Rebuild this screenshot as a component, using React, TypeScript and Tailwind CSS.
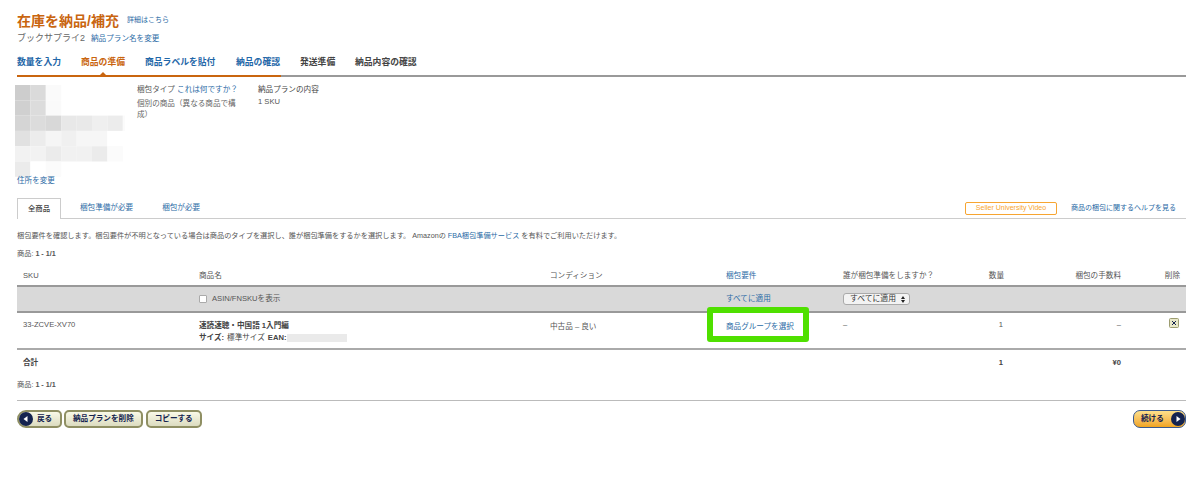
import React from "react";

const font = { fontFamily: '"Liberation Sans","Noto Sans CJK JP",sans-serif' };

const mosaic = [
  ["#cdcdcd", "#dadada", "#fafafa"],
  ["#d0d0d0", "#dcdcdc", "#fafafa"],
  ["#d5d5d5", "#dcdcdc", "#d8d8d8", "#e8e8e8", "#e9e9e9", "#efefef", "#ececec", "#fbfbfb"],
  ["#e1e1e1", "#ececec", "#f5f5f5", "#f0f0f0", "#f6f6f6", "#f6f6f6", "#ffffff"],
  ["#f2f2f2", "#f2f2f2", "#ebebeb", "#f1f1f1", "#f1f1f1", "#ebebeb", "#fbfbfb"],
  ["#ebebeb", "#ffffff", "#fbfbfb"],
];

const Link = ({ children, className = "" }: { children: React.ReactNode; className?: string }) => (
  <a className={`text-[#2a6aa5] ${className}`}>{children}</a>
);

const Mosaic = () => (
  <svg width="110" height="94" viewBox="0 0 110 94" className="block">
    {mosaic.map((row, y) =>
      row.map((c, x) => <rect key={`${x}-${y}`} x={x * 15.4} y={y * 15.3} width="15.4" height="15.3" fill={c} />)
    )}
  </svg>
);

const Circle = ({ dir }: { dir: "left" | "right" }) => (
  <svg width="14" height="14" viewBox="0 0 14 14" className="shrink-0">
    <circle cx="7" cy="7" r="7" fill="#14234f" />
    <polygon points={dir === "left" ? "8.5,4 4.5,7 8.5,10" : "5.5,4 9.5,7 5.5,10"} fill="#fff" />
  </svg>
);

const OliveBtn = ({ children, icon }: { children: React.ReactNode; icon?: boolean }) => (
  <button
    className={`flex h-[18px] items-center gap-[4px] border-2 border-[#8f8f63] bg-gradient-to-b from-[#f9f9e8] to-[#dcdcc0] text-[7.6px] font-bold text-[#14234f] ${
      icon ? "w-[45px] justify-start rounded-l-[9px] rounded-r-[5px]" : "justify-center rounded-[5px] px-[7px]"
    }`}
  >
    {icon && <Circle dir="left" />}
    {children}
  </button>
);

const row = "grid grid-cols-[176px_351px_176px_117px_117px_56px_117px_59px]";

export default function App() {
  return (
    <div style={font} className="h-[489px] w-[1200px] overflow-hidden bg-white text-[#555]">
      <div className="ml-[17px] w-[1169px] pt-[12px]">
        <div className="flex h-[17px] items-center gap-[8px]">
          <h1 className="text-[14px] leading-none font-bold text-[#c9650f]">在庫を納品/補充</h1>
          <Link className="text-[7px]">詳細はこちら</Link>
        </div>
        <div className="mt-[4px] flex h-[12px] items-center gap-[6px]">
          <span className="text-[9px] text-[#666]">ブックサプライ2</span>
          <Link className="text-[7.6px]">納品プラン名を変更</Link>
        </div>

        <div className="mt-[10px] flex h-[20px] items-start pt-[1px] text-[8.8px] leading-[12px] font-bold">
          <span className="w-[64px] text-[#1f67a8]">数量を入力</span>
          <span className="w-[64px] text-[#c9650f]">商品の準備</span>
          <span className="w-[91px] text-[#1f67a8]">商品ラベルを貼付</span>
          <span className="w-[64px] text-[#1f67a8]">納品の確認</span>
          <span className="w-[55px] text-[#444]">発送準備</span>
          <span className="text-[#444]">納品内容の確認</span>
        </div>
        <div className="relative flex h-[2px]">
          <div className="w-[264px] bg-[#c9650f]" />
          <div className="flex-1 bg-[#999]" />
          <div className="absolute -top-[3px] left-[83px] h-0 w-0 border-x-[3px] border-b-[3px] border-x-transparent border-b-[#c9650f]" />
        </div>

        <div className="mt-[7px] flex h-[113px] text-[7.6px] leading-[11px]">
          <div className="-ml-[2px] w-[122px] shrink-0">
            <div className="mt-[1px]">
              <Mosaic />
            </div>
            <Link className="mt-[-4px] block pl-[2px] leading-[12px]">住所を変更</Link>
          </div>
          <div className="w-[121px] shrink-0">
            <div className="mb-[3px]">
              梱包タイプ <Link>これは何ですか？</Link>
            </div>
            <div className="w-[105px] text-[#666]">個別の商品（異なる商品で構成）</div>
          </div>
          <div>
            <div className="mb-[1px] text-[#444]">納品プランの内容</div>
            <div>1 SKU</div>
          </div>
        </div>

        <div className="flex h-[22px] items-end border-b border-[#ccc]">
          <div className="-mb-px flex h-[21px] w-[44px] items-center justify-center border border-b-0 border-[#ccc] bg-white text-[7.4px] font-medium text-[#444]">
            全商品
          </div>
          <Link className="mb-[5px] ml-[19px] text-[7.6px]">梱包準備が必要</Link>
          <Link className="mb-[5px] ml-[29px] text-[7.6px]">梱包が必要</Link>
          <div className="mb-[3px] ml-auto flex items-center gap-[14px] pr-[10px]">
            <span className="flex h-[13px] w-[92px] items-center justify-center rounded-[2px] border-[1.5px] border-[#f7a531] text-[7px] font-medium text-[#f7a531]">
              Seller University Video
            </span>
            <Link className="text-[7px]">商品の梱包に関するヘルプを見る</Link>
          </div>
        </div>

        <p className="mt-[12px] text-[7.2px] leading-[10px] text-[#555]">
          梱包要件を確認します。梱包要件が不明となっている場合は商品のタイプを選択し、誰が梱包準備をするかを選択します。 Amazonの
          <Link> FBA梱包準備サービス </Link>
          を有料でご利用いただけます。
        </p>
        <p className="mt-[8px] text-[7.2px] leading-[10px]">
          商品: <b>1 - 1/1</b>
        </p>

        <div className={`${row} mt-[7px] h-[21px] items-center border-b-2 border-[#999] text-[7.6px]`}>
          <div className="pl-[6px]">SKU</div>
          <div className="pl-[6px]">商品名</div>
          <div className="pl-[6px]">コンディション</div>
          <Link className="pl-[6px]">梱包要件</Link>
          <div className="pl-[6px] whitespace-nowrap">誰が梱包準備をしますか？</div>
          <div className="pr-[6px] text-right">数量</div>
          <div className="pr-[6px] text-right">梱包の手数料</div>
          <div className="pr-[6px] text-right">削除</div>
        </div>

        <div className={`${row} h-[26px] items-center border-b-2 border-[#999] bg-[#d9d9d9] text-[7.6px]`}>
          <div />
          <label className="flex items-center gap-[5px] pl-[6px]">
            <span className="h-[8px] w-[8px] rounded-[1px] border border-[#aaa] bg-white" />
            ASIN/FNSKUを表示
          </label>
          <div />
          <Link className="pl-[6px]">すべてに適用</Link>
          <div className="pl-[6px]">
            <span className="flex h-[12px] w-[67px] items-center justify-between rounded-[3px] border border-[#aaa] bg-[#f3f3f3] pr-[4px] pl-[6px] text-[7.8px] text-[#333]">
              すべてに適用
              <svg width="4" height="7" viewBox="0 0 4 7">
                <path d="M0 3 2 0 4 3ZM0 4 2 7 4 4Z" fill="#222" />
              </svg>
            </span>
          </div>
          <div />
          <div />
          <div />
        </div>

        <div className={`${row} h-[37px] border-b-2 border-[#aaa] text-[7.6px]`}>
          <div className="pt-[6px] pl-[6px] text-[#555]">33-ZCVE-XV70</div>
          <div className="pt-[7px] pl-[6px] leading-[12px] text-[#444]">
            <div className="font-bold">速読速聴・中国語 1入門編</div>
            <div className="flex items-center">
              <b>サイズ:</b>
              <span className="mx-[3px]">標準サイズ</span>
              <b>EAN:</b>
              <span className="ml-[1px] h-[8px] w-[60px] bg-[#eaeaea]" />
            </div>
          </div>
          <div className="pt-[8px] pl-[6px]">中古品 – 良い</div>
          <div className="relative pt-[8px] pl-[6px]">
            <Link>商品グループを選択</Link>
            <div className="absolute -top-[6px] -left-[13px] h-[35px] w-[102px] rounded-[3px] border-[6px] border-[#4fe000]" />
          </div>
          <div className="pt-[6px] pl-[6px]">–</div>
          <div className="pt-[6px] pr-[7px] text-right">1</div>
          <div className="pt-[6px] pr-[6px] text-right">–</div>
          <div className="flex items-start justify-end pt-[5px] pr-[7px]">
            <svg width="10" height="10" viewBox="0 0 10 10">
              <rect x="0.5" y="0.5" width="9" height="9" rx="1" fill="#e8e8c8" stroke="#9c9c70" />
              <path d="M3 3 7 7M7 3 3 7" stroke="#14234f" strokeWidth="1" />
            </svg>
          </div>
        </div>

        <div className={`${row} h-[25px] items-center pt-[1px] text-[7.6px] font-bold text-[#444]`}>
          <div className="pl-[6px]">合計</div>
          <div />
          <div />
          <div />
          <div />
          <div className="pr-[7px] text-right">1</div>
          <div className="pr-[6px] text-right">¥0</div>
          <div />
        </div>

        <p className="mt-[5px] text-[7.2px] leading-[10px]">
          商品: <b>1 - 1/1</b>
        </p>

        <div className="mt-[10px] flex items-center justify-between border-t border-[#bbb] pt-[9px]">
          <div className="flex gap-[2px]">
            <OliveBtn icon>戻る</OliveBtn>
            <OliveBtn>納品プランを削除</OliveBtn>
            <div className="ml-[1px]">
              <OliveBtn>コピーする</OliveBtn>
            </div>
          </div>
          <button className="flex h-[18px] w-[53px] items-center justify-between rounded-[7px] border border-[#3b5a8e] bg-gradient-to-b from-[#fde08a] to-[#f0a41c] pl-[7px] text-[7.6px] font-bold text-[#14234f]">
            続ける
            <Circle dir="right" />
          </button>
        </div>
      </div>
    </div>
  );
}
